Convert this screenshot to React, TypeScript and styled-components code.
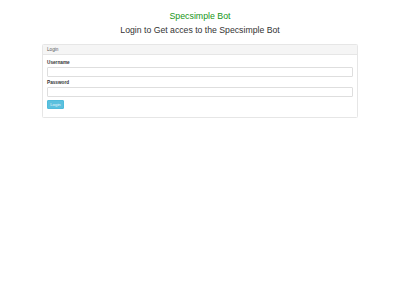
import React from "react";
import styled, { createGlobalStyle } from "styled-components";

const Global = createGlobalStyle`
  html, body { margin: 0; padding: 0; }
  body {
    background: #fff;
    font-family: "Liberation Sans", Arial, sans-serif;
    color: #333;
  }
`;

const Page = styled.div`
  width: 400px;
  min-height: 300px;
  display: flex;
  flex-direction: column;
  align-items: center;
  padding-top: 11px;
  box-sizing: border-box;
`;

const Title = styled.h1`
  margin: 0;
  font-size: 8.8px;
  line-height: 10px;
  font-weight: 400;
  color: #169516;
`;

const Subtitle = styled.h2`
  margin: 4px 0 0;
  font-size: 8.7px;
  line-height: 10px;
  font-weight: 400;
  color: #333;
`;

const Panel = styled.div`
  margin-top: 9px;
  width: 316px;
  box-sizing: border-box;
  border: 1px solid #e6e6e6;
  border-radius: 1.5px;
  background: #fff;
`;

const PanelHeading = styled.div`
  height: 9px;
  display: flex;
  align-items: center;
  padding: 0 4px;
  background: #f5f5f5;
  border-bottom: 1px solid #e6e6e6;
  font-size: 4.7px;
  color: #555;
`;

const PanelBody = styled.form`
  display: flex;
  flex-direction: column;
  padding: 5px 4px 8px;
`;

const Field = styled.div`
  display: flex;
  flex-direction: column;
  gap: 2px;
  margin-bottom: 3px;
`;

const Label = styled.label`
  display: block;
  height: 5px;
  font-size: 4.7px;
  line-height: 5px;
  font-weight: 700;
  color: #333;
`;

const Input = styled.input`
  display: block;
  height: 10px;
  box-sizing: border-box;
  margin: 0;
  border: 1px solid #dedede;
  border-radius: 1px;
  padding: 0 2px;
  font-size: 4.7px;
  outline: none;
  background: #fff;
`;

const Button = styled.button`
  align-self: flex-start;
  width: 17px;
  height: 9px;
  margin: 0;
  padding: 0;
  border: 1px solid #4fbbdb;
  border-radius: 1px;
  background: #5bc0de;
  color: #eaf7fb;
  font-family: "Liberation Sans", Arial, sans-serif;
  font-size: 4.3px;
  line-height: 7px;
`;

export default function App() {
  return (
    <>
      <Global />
      <Page>
        <Title>Specsimple Bot</Title>
        <Subtitle>Login to Get acces to the Specsimple Bot</Subtitle>
        <Panel>
          <PanelHeading>Login</PanelHeading>
          <PanelBody onSubmit={(e) => e.preventDefault()}>
            <Field>
              <Label htmlFor="username">Username</Label>
              <Input id="username" type="text" />
            </Field>
            <Field>
              <Label htmlFor="password">Password</Label>
              <Input id="password" type="password" />
            </Field>
            <Button type="submit">Login</Button>
          </PanelBody>
        </Panel>
      </Page>
    </>
  );
}
